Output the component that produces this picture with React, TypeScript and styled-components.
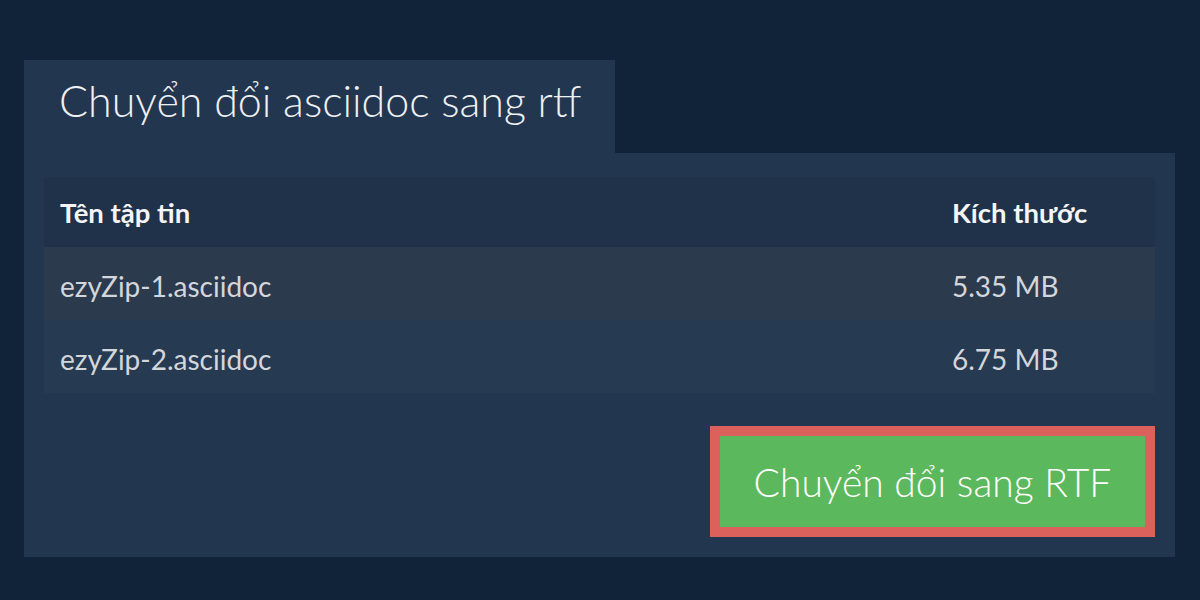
import styled, { createGlobalStyle } from "styled-components";

type FileRow = {
    name: string;
    size: string;
};

const files: FileRow[] = [
    { name: "ezyZip-1.asciidoc", size: "5.35 MB" },
    { name: "ezyZip-2.asciidoc", size: "6.75 MB" },
];

const GlobalStyle = createGlobalStyle`
    html, body {
        margin: 0;
        padding: 0;
        background: #112339;
        font-family: Lato, "Noto Sans", sans-serif;
    }
`;

const App = () => {
    return (
        <>
            <GlobalStyle />
            <SPage>
                <STab>
                    <STitle>Chuyển đổi asciidoc sang rtf</STitle>
                </STab>
                <SPanel>
                    <STable>
                        <thead>
                            <tr>
                                <SHeadCell>Tên tập tin</SHeadCell>
                                <SHeadCell $size>Kích thước</SHeadCell>
                            </tr>
                        </thead>
                        <tbody>
                            {files.map((file, i) => (
                                <SRow key={file.name} $odd={i % 2 === 0}>
                                    <SCell>{file.name}</SCell>
                                    <SCell $size>{file.size}</SCell>
                                </SRow>
                            ))}
                        </tbody>
                    </STable>
                    <SActions>
                        <SConvertButton>Chuyển đổi sang RTF</SConvertButton>
                    </SActions>
                </SPanel>
            </SPage>
        </>
    );
};

const SPage = styled.div`
    padding: 60px 24px 0 24px;
    display: flex;
    flex-direction: column;
    align-items: flex-start;
`;

const STab = styled.div`
    width: 591px;
    height: 93px;
    box-sizing: border-box;
    background: #22364f;
    padding: 0 35px;
    display: flex;
    align-items: center;
`;

const STitle = styled.h1`
    margin: 0;
    margin-top: -12px;
    font-size: 43px;
    font-weight: 300;
    color: #eef0f2;
    white-space: nowrap;
`;

const SPanel = styled.div`
    width: 1151px;
    box-sizing: border-box;
    background: #22364f;
    padding: 24px 20px 20px 20px;
`;

const STable = styled.table`
    width: 100%;
    border-collapse: collapse;
    border-spacing: 0;
`;

const SHeadCell = styled.th<{ $size?: boolean }>`
    height: 70px;
    padding: 0 0 0 ${({ $size }) => ($size ? "0" : "16px")};
    width: ${({ $size }) => ($size ? "203px" : "auto")};
    background: #1f324a;
    color: #f4f5f6;
    font-size: 27.5px;
    font-weight: 700;
    text-align: left;
`;

const SRow = styled.tr<{ $odd: boolean }>`
    background: ${({ $odd }) => ($odd ? "#2b3a4d" : "#263a51")};
`;

const SCell = styled.td<{ $size?: boolean }>`
    height: 69px;
    padding: 4px 0 0 ${({ $size }) => ($size ? "0" : "16px")};
    color: #d3d6da;
    font-size: 28px;
    font-weight: 400;
`;

const SActions = styled.div`
    display: flex;
    justify-content: flex-end;
    margin-top: 33px;
`;

const SConvertButton = styled.button`
    width: 445px;
    height: 111px;
    box-sizing: border-box;
    border: 10px solid #dc605c;
    background: #5cb85c;
    color: #ffffff;
    font-family: Lato, "Noto Sans", sans-serif;
    font-size: 39px;
    font-weight: 300;
    cursor: pointer;
    padding: 0;
`;

export default App;
